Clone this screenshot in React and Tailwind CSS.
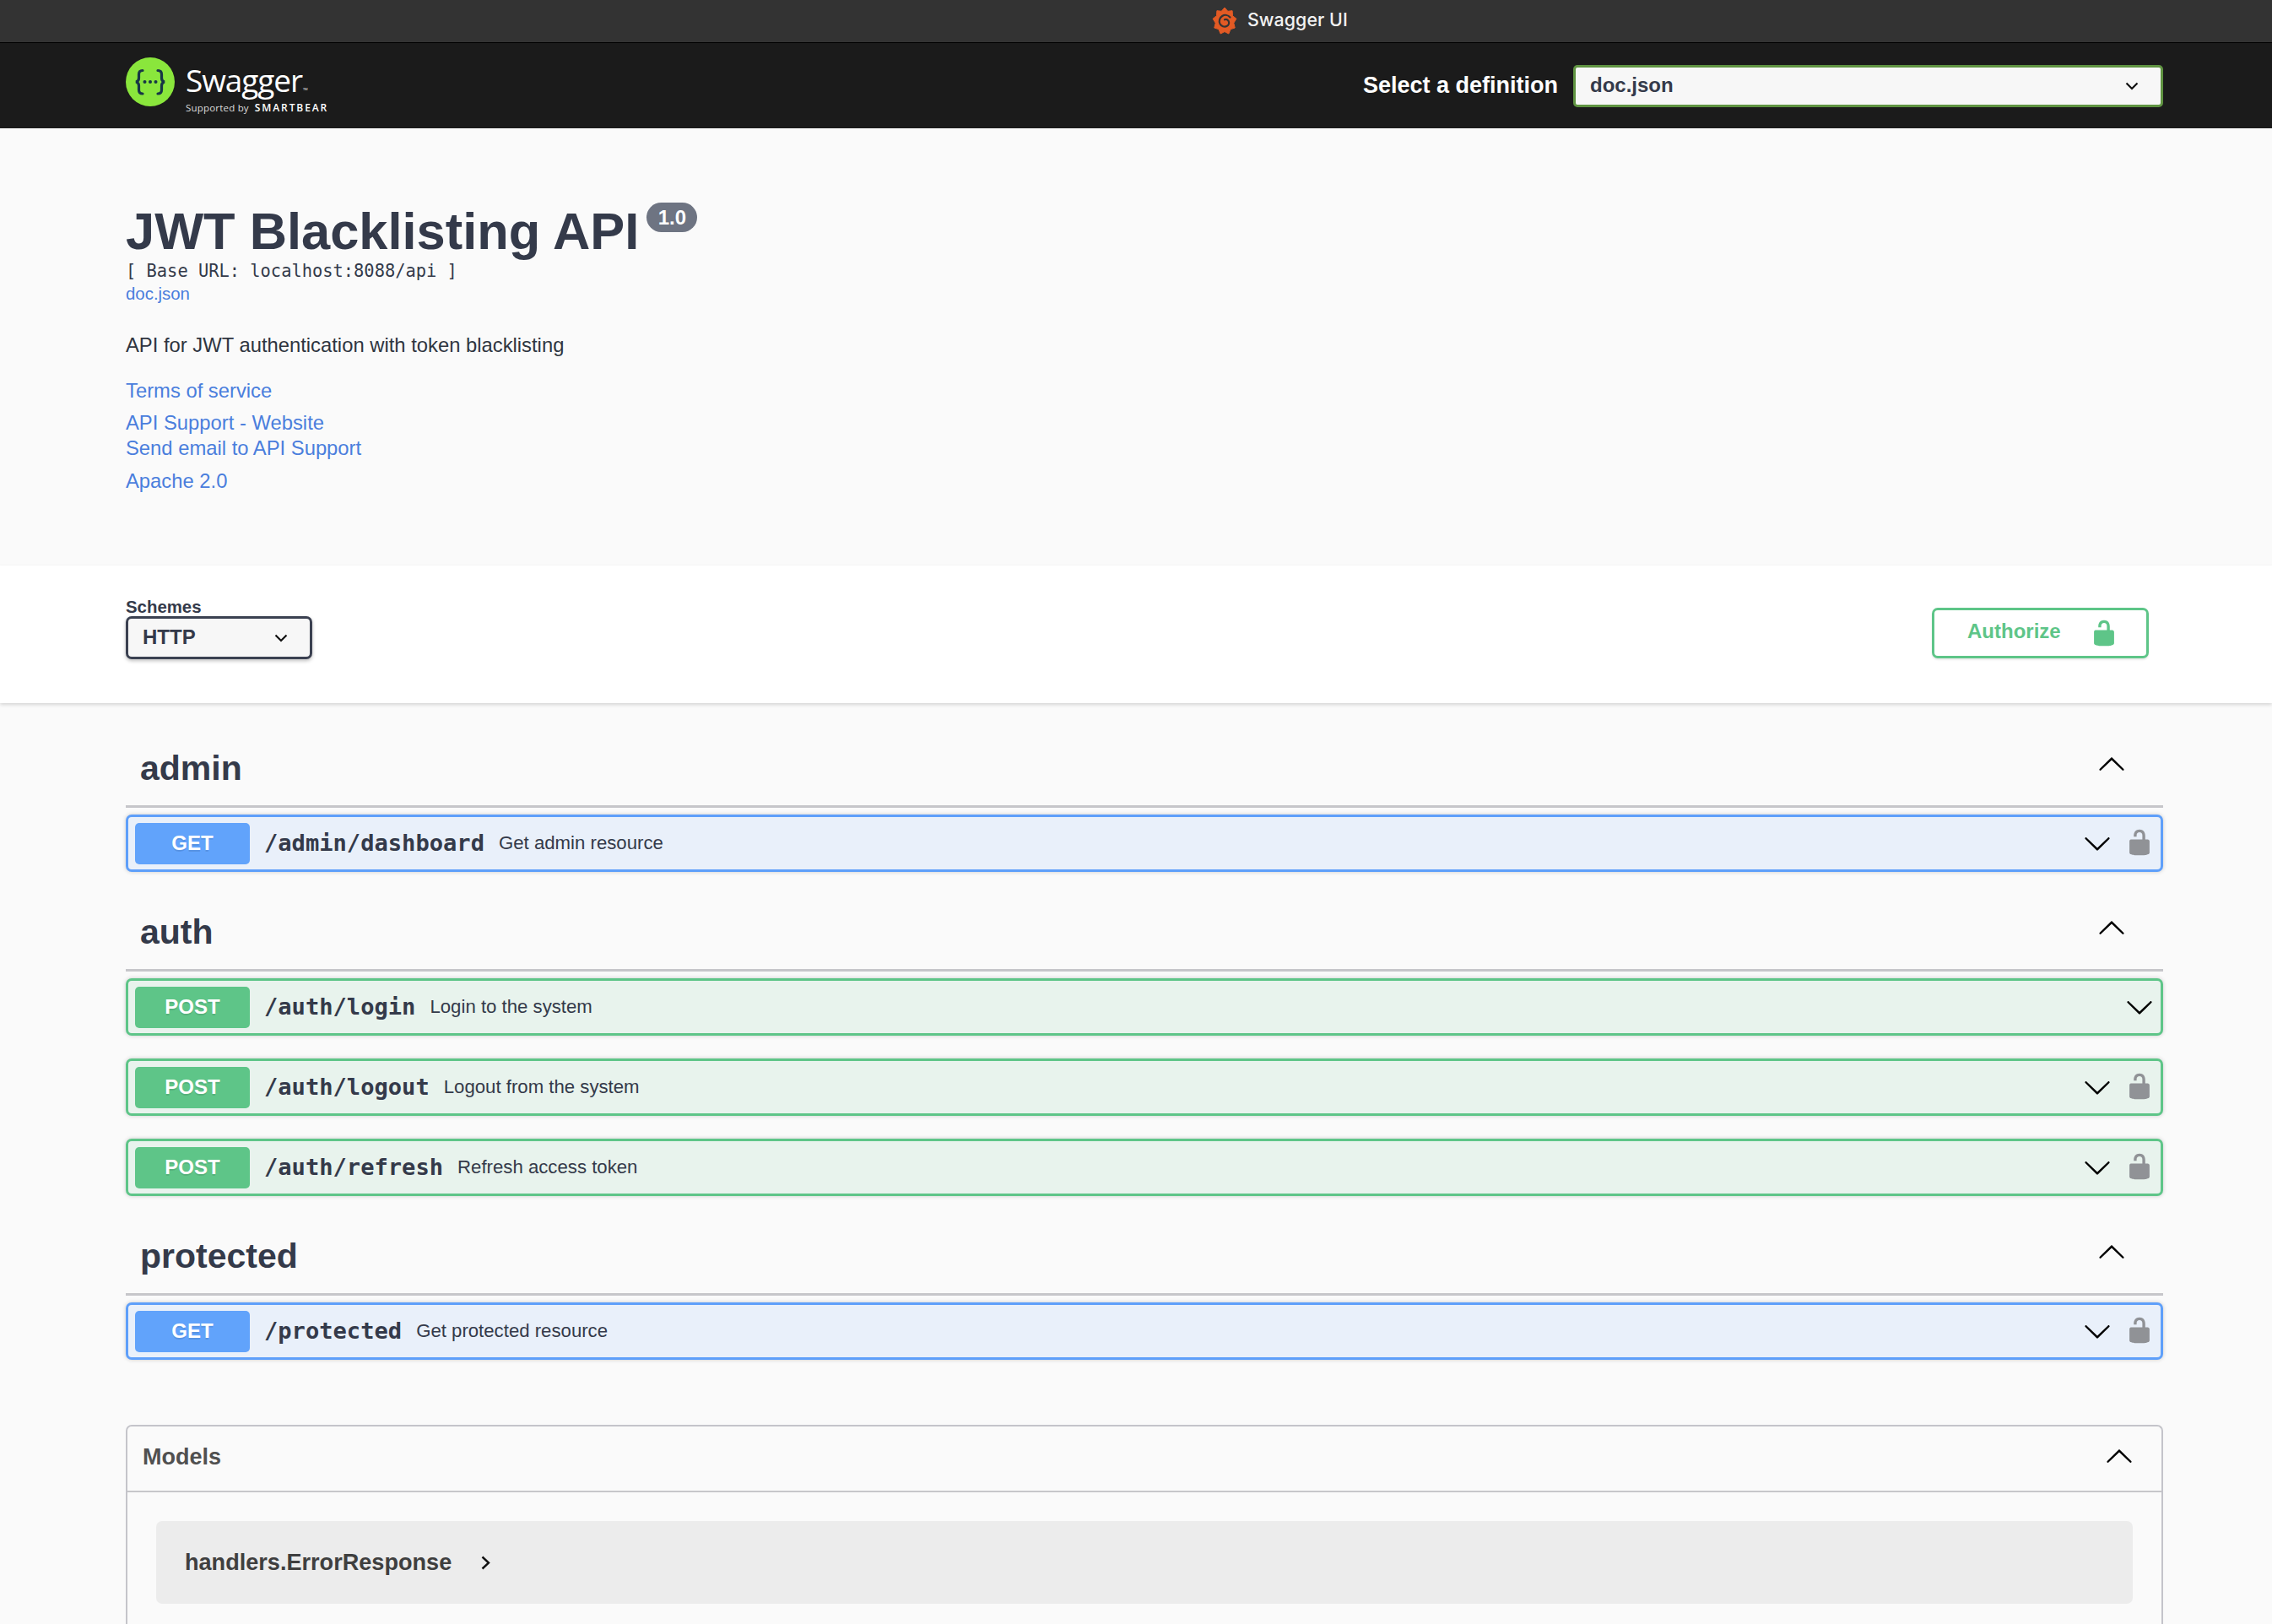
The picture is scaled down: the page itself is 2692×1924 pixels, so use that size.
import React from 'react';

const LOCK = "M15.8 8H14V5.6C14 2.703 12.665 1 10 1 7.334 1 6 2.703 6 5.6V6h2v-.801C8 3.754 8.797 3 10 3c1.203 0 2 .754 2 2.199V8H4c-.553 0-1 .646-1 1.199V17c0 .549.428 1.139.951 1.307l1.197.387C5.672 18.861 6.55 19 7.1 19h5.8c.549 0 1.428-.139 1.951-.307l1.196-.387c.524-.167.953-.757.953-1.306V9.199C17 8.646 16.352 8 15.8 8z";
const ARROW = "M17.418 6.109c.272-.268.709-.268.979 0s.271.701 0 .969l-7.908 7.83c-.27.268-.707.268-.979 0l-7.908-7.83c-.27-.268-.27-.701 0-.969.271-.268.709-.268.979 0L10 13.25l7.418-7.141z";

const sans = "font-['Liberation_Sans',Arial,sans-serif]";
const mono = "font-['DejaVu_Sans_Mono',monospace]";

const Lock = ({ className }) => (
  <svg viewBox="0 0 20 20" className={className} fill="currentColor"><path d={LOCK} /></svg>
);

const Arrow = ({ up }) => (
  <svg viewBox="0 0 20 20" className={up ? "w-[34px] h-[34px] rotate-180" : "w-[34px] h-[34px]"} fill="#000"><path d={ARROW} /></svg>
);

const SelectChevron = () => (
  <svg viewBox="0 0 16 10" className="w-[16px] h-[10px]" fill="none" stroke="#111" strokeWidth="2.2"><path d="M1.5 1.5 8 8l6.5-6.5" /></svg>
);

const GrafanaMark = () => {
  const pts = [];
  for (let i = 0; i < 18; i++) {
    const r = i % 2 === 0 ? 16 : 12.5;
    const a = (i / 18) * Math.PI * 2 - Math.PI / 2;
    pts.push(`${(16 + r * 0.88 * Math.cos(a)).toFixed(1)},${(16 + r * Math.sin(a)).toFixed(1)}`);
  }
  return (
    <svg viewBox="0 0 32 32" className="w-[32px] h-[32px]">
      <polygon points={pts.join(' ')} fill="#e25a24" stroke="#e25a24" strokeLinejoin="round" />
      <path d="M22.500 11.500c-2.500-2.800-6.500-3.300-9.300-1.500-3.200 2-4.300 6-2.700 9.200 1.600 3 5.200 4.300 8 2.900 2.300-1.200 3.200-3.900 2.200-6-1-1.900-3-2.500-4.700-1.800" fill="none" stroke="#333" strokeWidth="2.200" strokeLinecap="round" />
    </svg>
  );
};

const SwaggerLogo = () => (
  <div className="flex items-start">
    <svg viewBox="0 0 58 58" className="w-[58px] h-[58px] shrink-0">
      <circle cx="29" cy="29" r="29" fill="#8ae63c" />
      <g fill="none" stroke="#173646" strokeWidth="3.2" strokeLinecap="round">
        <path d="M20 15.500c-3.500 0-4.500 1.500-4.500 4.500v4.500c0 2.500-1 4-3.500 4.500 2.500.5 3.500 2 3.500 4.500v5c0 3 1 4.500 4.500 4.500" />
        <path d="M38 15.500c3.500 0 4.500 1.500 4.500 4.500v4.500c0 2.500 1 4 3.500 4.500-2.500.5-3.500 2-3.500 4.500v5c0 3-1 4.500-4.500 4.500" />
      </g>
      <circle cx="22.500" cy="29" r="2" fill="#173646" />
      <circle cx="29" cy="29" r="2" fill="#173646" />
      <circle cx="35.500" cy="29" r="2" fill="#173646" />
    </svg>
    <div className="ml-[13px] text-white font-['Open_Sans',sans-serif]">
      <div className="text-[37px] leading-[46px] h-[47px] mt-[4px] font-normal tracking-[-1.100px]">Swagger<sup className="text-[4px] ml-[1px] tracking-normal">TM</sup></div>
      <div className="flex items-center h-[14px] mt-[2px] text-[11.500px] leading-[14px] whitespace-nowrap">
        <span className="text-[#dddddd] tracking-[0.2px]">Supported by</span>
        <span className="ml-[7px] font-semibold tracking-[1.900px] text-[12px]">SMARTBEAR</span>
      </div>
    </div>
  </div>
);

const variants = {
  get: { row: "border-[#5e9ffa] bg-[#e9f0fa]", badge: "bg-[#61a3fb]" },
  post: { row: "border-[#5ec588] bg-[#e8f3ed]", badge: "bg-[#5ec588]" },
};

const OpRow = ({ method, path, summary, locked = true }) => {
  const v = variants[method];
  return (
    <div className={`flex items-center h-[68px] mb-[27px] rounded-[7px] border-[3px] pl-[8px] shadow-[0_0_5px_rgba(0,0,0,0.19)] ${v.row}`}>
      <div className={`flex items-center justify-center w-[136px] h-[49px] rounded-[5px] text-white font-bold text-[24px] ${sans} [text-shadow:0_2px_0_rgba(0,0,0,0.1)] ${v.badge}`}>
        {method.toUpperCase()}
      </div>
      <span className={`ml-[17px] text-[27.100px] font-bold text-[#343a4a] ${mono}`}>{path}</span>
      <span className="ml-[17px] text-[22.200px] text-[#343a4a]">{summary}</span>
      <div className={locked ? "ml-auto flex items-center pr-[12px]" : "ml-auto flex items-center pr-[8px]"}>
        <div className={locked ? "mr-[18px]" : ""}><Arrow /></div>
        {locked && <Lock className="w-[34px] h-[34px] text-[#909296] -translate-y-[1px] -ml-[2px] -mr-[4px]" />}
      </div>
    </div>
  );
};

const Tag = ({ name, children }) => (
  <div>
    <div className="flex items-center justify-between h-[91px] pl-[17px] pr-[44px] border-b-[3px] border-[#c6c6ca] mb-[8px]">
      <h3 className="text-[41px] font-bold text-[#343a4a] leading-none">{name}</h3>
      <div className="-translate-y-[4px]"><Arrow up /></div>
    </div>
    {children}
  </div>
);

export default function App() {
  return (
    <div className={`w-[2692px] h-[1924px] overflow-hidden bg-[#fafafa] ${sans}`}>
      {/* window title bar */}
      <div className="flex items-center h-[51px] pl-[1435px] bg-[#333333] border-b-[1px] border-[#000]">
        <GrafanaMark />
        <span className="ml-[11px] text-[21.300px] font-medium text-[#f2f2f2] font-['Inter',sans-serif] tracking-[0.1px] -translate-y-[1px]">Swagger UI</span>
      </div>

      {/* top bar */}
      <div className="flex items-center justify-between h-[101px] bg-[#1b1b1b] pl-[149px] pr-[129px]">
        <SwaggerLogo />
        <div className="flex items-center">
          <span className="text-[27px] font-bold text-white mr-[18px]">Select a definition</span>
          <div className="flex items-center justify-between w-[699px] h-[50px] rounded-[5px] border-[3px] border-[#5f9341] bg-[#f7f7f7] pl-[17px] pr-[26px]">
            <span className="text-[24px] font-bold text-[#343a4a] -translate-y-[1px]">doc.json</span>
            <SelectChevron />
          </div>
        </div>
      </div>

      {/* info */}
      <div className="h-[518px] pl-[149px] pt-[84px]">
        <div className="flex items-start">
          <h2 className="text-[61.400px] font-bold leading-[76px] text-[#343a4a] h-[76px]">JWT Blacklisting API</h2>
          <span className="ml-[9px] mt-[4px] flex items-center justify-center w-[60px] h-[35px] rounded-[20px] bg-[#6e7482] text-[24px] font-bold text-white">1.0</span>
        </div>
        <div className={`text-[20.400px] leading-[26px] -mt-[4px] text-[#343a4a] ${mono}`}>[ Base URL: localhost:8088/api ]</div>
        <div className="text-[20.400px] leading-[26px] mt-[1px] text-[#4a7edd]">doc.json</div>
        <p className="text-[23.800px] leading-[34px] mt-[31px] text-[#2f3540]">API for JWT authentication with token blacklisting</p>
        <div className="text-[23.800px] leading-[30px] text-[#4a7edd]">
          <div className="mt-[22px]">Terms of service</div>
          <div className="mt-[8px]">API Support - Website</div>
          <div>Send email to API Support</div>
          <div className="mt-[9px]">Apache 2.0</div>
        </div>
      </div>

      {/* schemes */}
      <div className="flex items-start justify-between h-[163px] bg-white pl-[149px] pr-[146px] shadow-[0_2px_4px_rgba(0,0,0,0.15)] relative">
        <div className="pt-[38px]">
          <div className="text-[20.400px] font-bold leading-[22px] text-[#343a4a]">Schemes</div>
          <div className="flex items-center justify-between w-[221px] h-[51px] rounded-[7px] border-[3.500px] border-[#3b4151] bg-[#f7f7f7] pl-[17px] pr-[26px] shadow-[0_2px_4px_rgba(0,0,0,0.25)]">
            <span className="text-[24px] font-bold text-[#343a4a] -translate-y-[1px]">HTTP</span>
            <SelectChevron />
          </div>
        </div>
        <div className="flex items-center w-[257px] h-[60px] rounded-[7px] border-[3.500px] border-[#5ec588] bg-white pl-[39px] mt-[50px] shadow-[0_2px_2px_rgba(0,0,0,0.08)]">
          <span className="text-[24px] font-bold text-[#5ec588] -translate-y-[2px]">Authorize</span>
          <Lock className="w-[34px] h-[34px] ml-[34px] text-[#5ec588]" />
        </div>
      </div>

      {/* operations */}
      <div className="pl-[149px] pr-[129px] pt-[33px]">
        <Tag name="admin">
          <OpRow method="get" path="/admin/dashboard" summary="Get admin resource" />
        </Tag>
        <Tag name="auth">
          <OpRow method="post" path="/auth/login" summary="Login to the system" locked={false} />
          <OpRow method="post" path="/auth/logout" summary="Logout from the system" />
          <OpRow method="post" path="/auth/refresh" summary="Refresh access token" />
        </Tag>
        <Tag name="protected">
          <OpRow method="get" path="/protected" summary="Get protected resource" />
        </Tag>

        {/* models */}
        <div className="mt-[77px] rounded-t-[7px] border-[2px] border-b-0 border-[#c4c4ca] h-[300px]">
          <div className="flex items-center justify-between h-[78px] pl-[18px] pr-[33px] pb-[4px] border-b-[2px] border-[#c6c6ca]">
            <span className="text-[27px] font-bold text-[#505050]">Models</span>
            <Arrow up />
          </div>
          <div className="mx-[34px] mt-[34px] flex items-center h-[98px] rounded-[7px] bg-[#ececec] pl-[34px]">
            <span className="text-[27.100px] font-bold text-[#3f3f3f]">handlers.ErrorResponse</span>
            <svg viewBox="0 0 11 17" className="w-[11px] h-[17px] ml-[35px]" fill="none" stroke="#111" strokeWidth="2.400"><path d="M1.500 1.500 9 8.500l-7.500 7" /></svg>
          </div>
        </div>
      </div>
    </div>
  );
}
